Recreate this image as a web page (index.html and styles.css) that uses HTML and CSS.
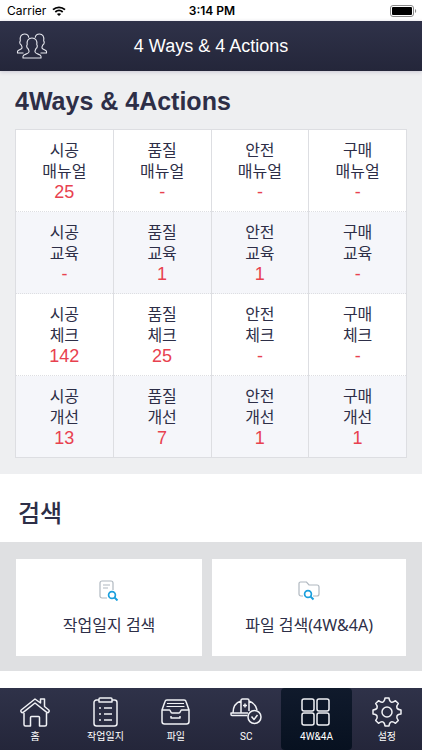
FILE: index.html
```html
<!DOCTYPE html>
<html lang="ko">
<head>
    <meta charset="UTF-8">
    <meta name="viewport" content="width=device-width, initial-scale=1.0">
    <title>4 Ways &amp; 4 Actions</title>
    <link rel="stylesheet" href="styles.css">
</head>
<body>

<!-- Status bar -->
<div class="status-bar">
    <div class="carrier">
        <span>Carrier</span>
        <svg width="14" height="10" viewBox="0 0 14 10">
            <path d="M1 3.7C4.4.5 9.6.5 13 3.7M3.3 6C5.5 4 8.500 4 10.700 6" fill="none" stroke="#000" stroke-width="1.8"/>
            <path d="M7 10L4.900 7.900C6.100 6.900 7.900 6.900 9.100 7.900Z"/>
        </svg>
    </div>
    <span class="time">3:14 PM</span>
    <div class="battery">
        <svg width="27" height="12" viewBox="0 0 27 12">
            <rect x=".5" y=".5" width="23" height="11" rx="2.500" fill="none" stroke="#8a8a8a"/>
            <rect x="2" y="2" width="20" height="8" rx="1"/>
            <path d="M25 4v4c1.600-.6 1.600-3.400 0-4z" fill="#8a8a8a"/>
        </svg>
    </div>
</div>

<header class="top-bar">
    <button type="button" class="people-btn" aria-label="Members">
        <svg width="32" height="26" viewBox="0 0 32 26">
            <g fill="none" stroke="#e6e7ee" stroke-width="1.100" stroke-linejoin="round">
                <path d="M7.500 20H1.500v-1.500c0-1.500 4-1.800 4.500-3.500.3-1.400-.4-2-1-3.200C3.500 11 3.500 8.500 4.300 8 3.500 3.500 5.500 1 8.500 1c2.500 0 4 1.500 4.300 3.700"/>
                <path d="M24.500 20h6v-1.500c0-1.500-4-1.800-4.500-3.500-.3-1.400.4-2 1-3.200 1.500-.8 1.500-3.300.7-3.800.8-4.500-1.200-7-4.200-7-2.500 0-4 1.500-4.300 3.700"/>
                <path d="M7 25v-1.700c0-2.300 5.500-2 6-4.300.3-1.400-.6-2.300-1-3.500-1.500-.7-1.600-3.200-.8-3.800C10.500 7.500 12.500 5 16 5s5.500 2.500 4.800 6.700c.8.6.7 3.100-.8 3.800-.4 1.200-1.300 2.100-1 3.500.5 2.300 6 2 6 4.300V25z"/>
            </g>
        </svg>
    </button>
    <span class="page-title">4 Ways &amp; 4 Actions</span>
</header>

<main>
    <section class="ways">
        <h1>4Ways &amp; 4Actions</h1>
        <table>
            <tr>
                <td>시공<br>매뉴얼<b>25</b></td>
                <td>품질<br>매뉴얼<b>-</b></td>
                <td>안전<br>매뉴얼<b>-</b></td>
                <td>구매<br>매뉴얼<b>-</b></td>
            </tr>
            <tr>
                <td>시공<br>교육<b>-</b></td>
                <td>품질<br>교육<b>1</b></td>
                <td>안전<br>교육<b>1</b></td>
                <td>구매<br>교육<b>-</b></td>
            </tr>
            <tr>
                <td>시공<br>체크<b>142</b></td>
                <td>품질<br>체크<b>25</b></td>
                <td>안전<br>체크<b>-</b></td>
                <td>구매<br>체크<b>-</b></td>
            </tr>
            <tr>
                <td>시공<br>개선<b>13</b></td>
                <td>품질<br>개선<b>7</b></td>
                <td>안전<br>개선<b>1</b></td>
                <td>구매<br>개선<b>1</b></td>
            </tr>
        </table>
    </section>

    <section class="search">
        <h2>검색</h2>
        <div class="search-links">
            <a href="#diary">
                <svg width="22" height="22" viewBox="0 0 22 22">
                    <path d="M9 19H4a2 2 0 0 1-2-2V4a2 2 0 0 1 2-2h9a2 2 0 0 1 2 2v7M5 6h7M5 9h5" fill="none" stroke="#b0b8c0" stroke-width="1.200"/>
                    <circle cx="14" cy="16" r="3.400" fill="#fff" stroke="#1a9fdd" stroke-width="1.700"/>
                    <path d="M16.500 18.500l3 3" stroke="#1a9fdd" stroke-width="1.900"/>
                </svg>
                작업일지 검색
            </a>
            <a href="#files">
                <svg width="22" height="22" viewBox="0 0 22 22">
                    <path d="M5 17H3a2 2 0 0 1-2-2V4.500A1.500 1.500 0 0 1 2.500 3h6L11 6h8a2 2 0 0 1 2 2v7a2 2 0 0 1-2 2h-4" fill="none" stroke="#b0b8c0" stroke-width="1.200"/>
                    <circle cx="10" cy="15" r="3.400" fill="#fff" stroke="#1a9fdd" stroke-width="1.700"/>
                    <path d="M12.500 17.500l3 3" stroke="#1a9fdd" stroke-width="1.900"/>
                </svg>
                파일 검색(4W&amp;4A)
            </a>
        </div>
    </section>
</main>

<!-- Bottom tabs -->
<nav class="tabs">
    <a href="#home">
        <svg width="32" height="30" viewBox="0 0 32 30">
            <path d="M5 16v11.500A1.500 1.500 0 0 0 6.500 29h5v-8.500a1 1 0 0 1 1-1h7a1 1 0 0 1 1 1V29H26a1.500 1.500 0 0 0 1.500-1.500V16"/>
            <path d="M16 2L2.200 13c-1.200 1.200.6 3.300 2 2.300L16 6l11.800 9.300c1.500 1 3.200-1 2-2.300L25.500 9.500V2h-4v4z"/>
        </svg>
        홈
    </a>
    <a href="#diary">
        <svg width="32" height="30" viewBox="0 0 32 30">
            <path d="M10 3H7.500A2.500 2.500 0 0 0 5 5.500v21A2.500 2.500 0 0 0 7.500 29h18a2.500 2.500 0 0 0 2.500-2.500v-21A2.500 2.500 0 0 0 25.500 3H23M11 1h11a1 1 0 0 1 1 1v3H10V2a1 1 0 0 1 1-1zM15 11h8M15 17h8M15 23h8M10 11h2M10 17h2M10 23h2"/>
        </svg>
        작업일지
    </a>
    <a href="#files">
        <svg width="32" height="30" viewBox="0 0 32 30">
            <path d="M2 13L5 4.500A2 2 0 0 1 7 3h17a2 2 0 0 1 2 1.500L29 13v11.500a2.500 2.500 0 0 1-2.500 2.500h-22A2.500 2.500 0 0 1 2 24.500zM2 13h7.500c1 0 1 3 2.500 3h7c1.500 0 1.500-3 2.500-3H29M11 19v2h9v-2"/>
            <path d="M7 6.500h17M6.500 9.500h18" stroke-width="1.200"/>
        </svg>
        파일
    </a>
    <a href="#sc">
        <svg width="32" height="30" viewBox="0 0 32 30">
            <path d="M17.500 18.500H2a1 1 0 0 1-1-1v-1.500h17M3 16C3 10 6 5.500 11 4M27 13c-1-4.500-3.500-7.500-8-9M11 16V3.500c0-.8.500-1.500 1.500-1.500h5c1 0 1.500.700 1.500 1.500V14M15 6.500v4M13 8.500h4"/>
            <circle cx="24.500" cy="20" r="6.500"/>
            <path d="M21.500 19.500l2.500 3L27.500 18"/>
        </svg>
        SC
    </a>
    <a href="#ways" class="active">
        <svg width="32" height="30" viewBox="0 0 32 30">
            <rect x="2" y="2" width="12" height="12" rx="2"/>
            <rect x="17" y="2" width="12" height="12" rx="2"/>
            <rect x="2" y="16" width="12" height="12" rx="2"/>
            <rect x="17" y="16" width="12" height="12" rx="2"/>
        </svg>
        4W&amp;4A
    </a>
    <a href="#settings">
        <svg width="32" height="30" viewBox="0 0 32 30">
            <path d="M14 1h4C18.500 5.500 21 6.500 24.500 3.700L27.300 6.500C24.500 10 25.500 12.500 30 13v4C25.500 17.500 24.500 20 27.300 23.500L24.500 26.300C21 23.500 18.500 24.500 18 29h-4C13.500 24.500 11 23.500 7.500 26.300L4.700 23.500C7.500 20 6.500 17.500 2 17v-4C6.500 12.500 7.500 10 4.700 6.500L7.500 3.700C11 6.500 13.500 5.500 14 1z"/>
            <circle cx="16" cy="15" r="5"/>
        </svg>
        설정
    </a>
</nav>

</body>
</html>
```
FILE: styles.css
```css
* {
    box-sizing: border-box;
}

body {
    margin: 0;
    min-height: 100vh;
    display: flex;
    flex-direction: column;
    background-color: white;
    color: #2d2e47;
    font-family: "Liberation Sans", "Noto Sans CJK KR", sans-serif;
}

a {
    color: inherit;
    text-decoration: none;
}

/* Status bar */
.status-bar {
    display: grid;
    grid-template-columns: 1fr auto 1fr;
    align-items: center;
    height: 21px;
    padding: 0 5px 0 7px;
    color: black;
    font-family: Inter, sans-serif;
    font-size: 12px;
}

.carrier {
    display: flex;
    align-items: center;
    gap: 6px;
}

.time {
    font-weight: 600;
}

.battery {
    display: flex;
    justify-content: flex-end;
}

/* Header */
.top-bar {
    display: grid;
    grid-template-columns: 1fr auto 1fr;
    align-items: center;
    height: 50px;
    padding: 0 16px;
    background: linear-gradient(#2f3249, #24263a);
    box-shadow: 0 1px 4px #c9c7d3;
    z-index: 1;
}

.people-btn {
    display: flex;
    justify-self: start;
    padding: 0;
    border: none;
    background: none;
    cursor: pointer;
}

.page-title {
    color: white;
    font-size: 18px;
}

main {
    flex: 1;
}

/* 4Ways table */
.ways {
    padding: 15px 15px 16px;
    background-color: #eeeff1;
}

h1 {
    margin: 0 0 13px;
    font-size: 25px;
    line-height: 30px;
}

table {
    width: 100%;
    table-layout: fixed;
    border-collapse: collapse;
    background-color: white;
    border: 1px solid #dddee2;
}

td {
    padding: 10px 0 8px;
    border-left: 1px solid #dddee2;
    border-bottom: 1px dotted #dddee2;
    text-align: center;
    font-size: 16px;
    line-height: 21px;
}

tr:last-child td {
    border-bottom: 1px solid #dddee2;
}

tr:nth-child(even) {
    background-color: #f5f6fa;
}

td b {
    display: block;
    color: #e8414f;
    font-size: 18px;
    font-weight: normal;
}

/* Search */
h2 {
    margin: 0;
    padding: 22px 18px 10px;
    font-size: 24px;
    line-height: 36px;
    font-weight: 500;
}

.search-links {
    display: grid;
    grid-template-columns: 49fr 51fr;
    gap: 10px;
    padding: 17px 16px 15px;
    background-color: #dfe0e2;
}

.search-links a {
    display: flex;
    flex-direction: column;
    align-items: center;
    gap: 12px;
    padding: 20px 0 19px;
    background-color: white;
    font-family: "Noto Sans", "Noto Sans CJK KR", sans-serif;
    font-size: 16px;
    line-height: 24px;
}

/* Bottom tabs */
.tabs {
    display: grid;
    grid-template-columns: repeat(6, 1fr);
    height: 62px;
    background: linear-gradient(#2f3249, #24263a);
}

.tabs a {
    display: flex;
    flex-direction: column;
    align-items: center;
    gap: 2px;
    padding-top: 9px;
    color: white;
    font-family: Roboto, "Noto Sans CJK KR", sans-serif;
    font-size: 10px;
    line-height: 16px;
}

.tabs a.active {
    border-radius: 4px;
    background: linear-gradient(#101a2c, #071120);
}

.tabs svg {
    fill: none;
    stroke: #f0f1f5;
    stroke-width: 1.500;
    stroke-linejoin: round;
}
```
